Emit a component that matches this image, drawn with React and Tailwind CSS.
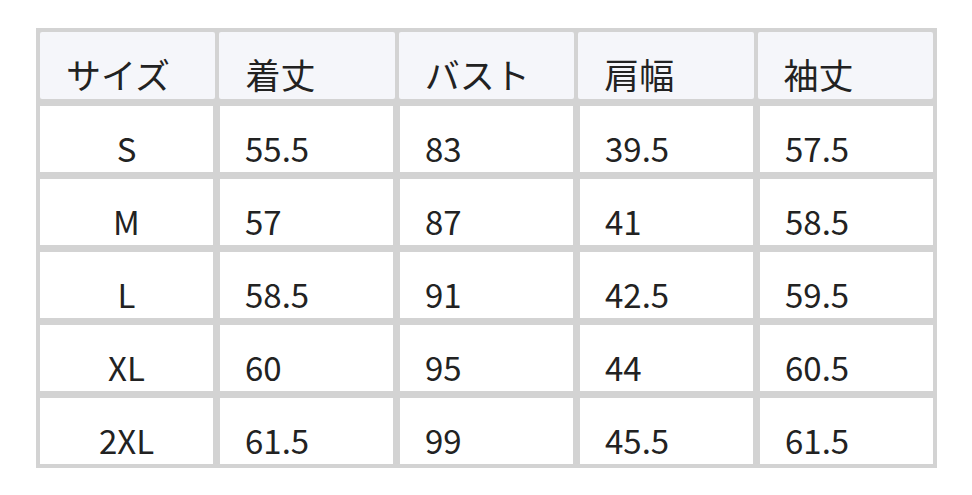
import React from "react";

const headers = ["サイズ", "着丈", "バスト", "肩幅", "袖丈"];
const rows = [
  ["S", "55.5", "83", "39.5", "57.5"],
  ["M", "57", "87", "41", "58.5"],
  ["L", "58.5", "91", "42.5", "59.5"],
  ["XL", "60", "95", "44", "60.5"],
  ["2XL", "61.5", "99", "45.5", "61.5"],
];

export default function App() {
  return (
    <div
      className="w-[972px] h-[495px] bg-white pl-[36px] pt-[28px]"
      style={{ fontFamily: '"Noto Sans CJK JP", "Noto Sans", sans-serif' }}
    >
      <div className="w-[901px] bg-[#d3d3d3] p-[4px] flex flex-col gap-[7px] leading-[40px] text-[#222222]">
        <div className="grid grid-cols-5 gap-x-[4px] text-[35px]">
          {headers.map((h) => (
            <div
              key={h}
              className="h-[67px] bg-[#f5f6fa] flex items-end pl-[26px] pb-[5px] rounded-[2px]"
            >
              {h}
            </div>
          ))}
        </div>
        {rows.map((r) => (
          <div key={r[0]} className="grid grid-cols-5 gap-x-[7px] text-[33px]">
            {r.map((c, i) => (
              <div
                key={i}
                className={
                  i === 0
                    ? "h-[66px] bg-white flex items-end justify-center pb-[4px]"
                    : "h-[66px] bg-white flex items-end pl-[25px] pb-[4px]"
                }
              >
                {c}
              </div>
            ))}
          </div>
        ))}
      </div>
    </div>
  );
}
